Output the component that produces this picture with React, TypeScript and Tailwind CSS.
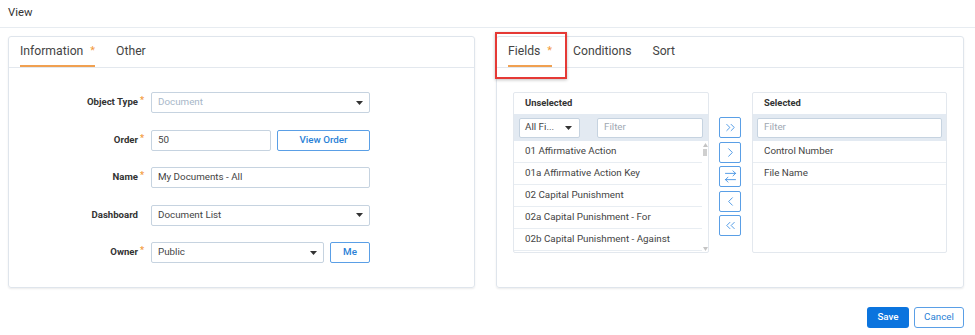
import { ChevronsRight, ChevronRight, ArrowRightLeft, ChevronLeft, ChevronsLeft } from 'lucide-react';

const Caret = () => (
  <svg width="7" height="4" viewBox="0 0 7 4" className="shrink-0">
    <path d="M0 0h7L3.5 4z" fill="#333" />
  </svg>
);

const Tabs = ({ tabs }: { tabs: { name: string; required?: boolean; active?: boolean }[] }) => (
  <div className="flex h-[31px] gap-[21px] border-b border-[#e3e8ee] px-[11px]">
    {tabs.map((t) => (
      <div
        key={t.name}
        className={`flex items-center gap-[7px] border-b-2 pt-[1px] text-[12.2px] text-[#444] ${t.active ? 'border-[#f0a050]' : 'border-transparent'}`}
      >
        {t.name}
        {t.required && <span className="text-[11px] text-[#f39a3c]">*</span>}
      </div>
    ))}
  </div>
);

const Label = ({ text, required }: { text: string; required?: boolean }) => (
  <div className="relative w-[129px] shrink-0 text-right text-[9.6px] font-bold text-[#333]">
    {text}
    {required && <span className="absolute -right-[6px] top-[-1px] text-[9px] text-[#f39a3c]">*</span>}
  </div>
);

const inputCls = 'flex h-[21px] items-center rounded-[2px] border border-[#c6d3e0] bg-white px-[6px] text-[9.8px] text-[#444]';
const btnCls = 'flex h-[21px] items-center justify-center rounded-[2px] border border-[#5a9fe6] bg-white text-[9.8px] font-medium text-[#2a7fd6]';

const unselected = [
  '01 Affirmative Action',
  '01a Affirmative Action Key',
  '02 Capital Punishment',
  '02a Capital Punishment - For',
  '02b Capital Punishment - Against',
];

const selected = ['Control Number', 'File Name'];

export default function App() {
  return (
    <div className="relative h-[335px] w-[975px] bg-white" style={{ fontFamily: 'Roboto, "Liberation Sans", sans-serif' }}>
      <div className="flex h-[28px] items-center border-b border-[#e7ecf1] px-[8px] text-[11.3px] text-[#333]">View</div>

      <div className="flex gap-[21px] pl-[8px] pr-[11px] pt-[8px]">
        {/* left card */}
        <div className="h-[252px] w-[468px] rounded-[3px] border border-[#dfe5ec] shadow-[0_1px_2px_rgba(0,0,0,0.08)]">
          <Tabs tabs={[{ name: 'Information', required: true, active: true }, { name: 'Other' }]} />
          <div className="flex flex-col gap-[16.5px] pt-[24px]">
            <div className="flex items-center">
              <Label text="Object Type" required />
              <div className={`${inputCls} ml-[13px] w-[219px] justify-between bg-[#f3f7fa] text-[#a8b7c8]`}>
                Document
                <Caret />
              </div>
            </div>
            <div className="flex items-center">
              <Label text="Order" required />
              <div className={`${inputCls} ml-[13px] w-[120px]`}>50</div>
              <div className={`${btnCls} ml-[6px] w-[93px]`}>View Order</div>
            </div>
            <div className="flex items-center">
              <Label text="Name" required />
              <div className={`${inputCls} ml-[13px] w-[219px]`}>My Documents - All</div>
            </div>
            <div className="flex items-center">
              <Label text="Dashboard" />
              <div className={`${inputCls} ml-[13px] w-[219px] justify-between`}>
                Document List
                <Caret />
              </div>
            </div>
            <div className="flex items-center">
              <Label text="Owner" required />
              <div className={`${inputCls} ml-[13px] w-[173px] justify-between`}>
                Public
                <Caret />
              </div>
              <div className={`${btnCls} ml-[6px] w-[40px]`}>Me</div>
            </div>
          </div>
        </div>

        {/* right card */}
        <div className="h-[252px] w-[468px] rounded-[3px] border border-[#dfe5ec] shadow-[0_1px_2px_rgba(0,0,0,0.08)]">
          <Tabs tabs={[{ name: 'Fields', required: true, active: true }, { name: 'Conditions' }, { name: 'Sort' }]} />
          <div className="flex px-[16px] pt-[24px]">
            {/* unselected */}
            <div className="h-[161px] w-[196px] overflow-hidden rounded-[2px] border border-[#e3e8ee]">
              <div className="flex h-[21px] items-center px-[11px] text-[9.4px] font-bold text-[#333]">Unselected</div>
              <div className="flex h-[27px] items-center gap-[17px] bg-[#e3eaf2] px-[5px]">
                <div className="flex h-[20px] w-[62px] items-center justify-between rounded-[2px] border border-[#c6d3e0] bg-white pl-[5px] pr-[7px] text-[9.8px] text-[#444]">
                  All Fi...
                  <Caret />
                </div>
                <div className="flex h-[20px] w-[108px] items-center rounded-[2px] border border-[#c6d3e0] bg-white px-[6px] text-[9.8px] text-[#a0a8b2]">Filter</div>
              </div>
              <div className="flex">
                <div className="flex-1">
                  {unselected.map((f) => (
                    <div key={f} className="flex h-[22px] items-center border-b border-[#e8edf2] px-[11px] text-[9.8px] text-[#444]">
                      {f}
                    </div>
                  ))}
                </div>
                <div className="flex w-[6px] flex-col items-center pt-[2px]">
                  <svg width="5" height="4" viewBox="0 0 5 4"><path d="M0 4h5L2.5 0z" fill="#c4c4c4" /></svg>
                  <div className="mt-[2px] h-[7px] w-[4px] bg-[#cfcfcf]" />
                  <div className="flex-1" />
                  <svg width="5" height="4" viewBox="0 0 5 4"><path d="M0 0h5L2.5 4z" fill="#c4c4c4" /></svg>
                </div>
              </div>
            </div>

            {/* move buttons */}
            <div className="ml-[10px] flex flex-col gap-[3.5px] pt-[25px]">
              {[ChevronsRight, ChevronRight, ArrowRightLeft, ChevronLeft, ChevronsLeft].map((Icon, i) => (
                <div key={i} className="flex h-[21px] w-[22px] items-center justify-center rounded-[2px] border border-[#5a9fe6] bg-white text-[#2f86e0]">
                  <Icon size={15} strokeWidth={1.3} />
                </div>
              ))}
            </div>

            {/* selected */}
            <div className="ml-[11px] h-[161px] w-[195px] overflow-hidden rounded-[2px] border border-[#e3e8ee]">
              <div className="flex h-[21px] items-center px-[11px] text-[9.4px] font-bold text-[#333]">Selected</div>
              <div className="flex h-[27px] items-center bg-[#e3eaf2] px-[4px]">
                <div className="flex h-[20px] w-full items-center rounded-[2px] border border-[#c6d3e0] bg-white px-[6px] text-[9.8px] text-[#a0a8b2]">Filter</div>
              </div>
              {selected.map((f) => (
                <div key={f} className="flex h-[22px] items-center border-b border-[#e8edf2] px-[11px] text-[9.8px] text-[#444]">
                  {f}
                </div>
              ))}
            </div>
          </div>
        </div>
      </div>

      <div className="flex justify-end gap-[5px] pr-[11px] pt-[19px]">
        <div className="flex h-[21px] w-[42px] items-center justify-center rounded-[3px] bg-[#0b74de] text-[9.8px] font-medium text-white">Save</div>
        <div className="flex h-[21px] w-[50px] items-center justify-center rounded-[3px] border border-[#5a9fe6] bg-white text-[9.8px] text-[#2a7fd6]">Cancel</div>
      </div>

      {/* annotation highlight */}
      <div className="absolute left-[495px] top-[32px] h-[47px] w-[72px] border-2 border-[#e53935] shadow-[0_1px_3px_rgba(0,0,0,0.25)]" />
    </div>
  );
}
